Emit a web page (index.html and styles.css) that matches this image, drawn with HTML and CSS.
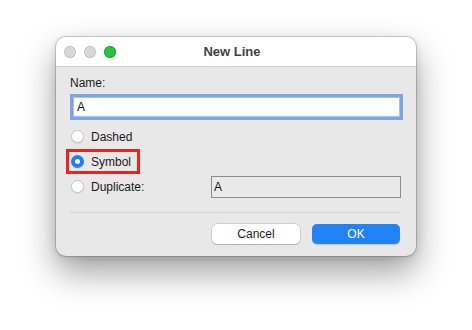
FILE: index.html
```html
<!DOCTYPE html>
<html lang="en">

<head>
    <meta charset="UTF-8">
    <meta name="viewport" content="width=device-width, initial-scale=1.0">
    <title>New Line</title>
    <link rel="stylesheet" href="styles.css">
</head>

<body>
    <div class="window">
        <div class="titlebar">
            <div class="lights">
                <span class="light"></span>
                <span class="light"></span>
                <span class="light green"></span>
            </div>
            <div class="title">New Line</div>
        </div>

        <div class="content">
            <label class="field-label" for="lineName">Name:</label>
            <input type="text" id="lineName" class="name-input" value="A">

            <div class="options">
                <div class="row">
                    <label class="radio"><span class="dot"></span>Dashed</label>
                </div>
                <div class="row">
                    <label class="radio"><span class="dot checked"></span>Symbol</label>
                    <span class="mark"></span>
                </div>
                <div class="row">
                    <label class="radio"><span class="dot"></span>Duplicate:</label>
                    <input type="text" class="dup-input" value="A" readonly>
                </div>
            </div>

            <div class="separator"></div>

            <div class="button-group">
                <button class="btn">Cancel</button>
                <button class="btn primary">OK</button>
            </div>
        </div>
    </div>
</body>

</html>
```

FILE: styles.css
```css
/* Janela do diálogo */
html {
    background-color: #ffffff;
}

body {
    margin: 0;
    min-height: 330px;
    font-family: "Liberation Sans", Arial, sans-serif;
    font-size: 12px;
    color: #1a1a1a;
    padding: 37px 0 0 56px;
    box-sizing: border-box;
}

.window {
    width: 360px;
    height: 219px;
    box-sizing: border-box;
    background-color: #e8e8e8;
    border-radius: 10px;
    overflow: hidden;
    box-shadow: 0 0 0 1px rgba(0, 0, 0, 0.16), 0 16px 34px rgba(0, 0, 0, 0.38), 0 2px 8px rgba(0, 0, 0, 0.12);
}

.titlebar {
    height: 29px;
    background-color: #ffffff;
    border-bottom: 1px solid #cfcfcf;
    display: flex;
    align-items: center;
}

.lights {
    display: flex;
    gap: 8px;
    padding-left: 8px;
}

.light {
    width: 12px;
    height: 12px;
    border-radius: 50%;
    background-color: #d8d8d8;
    box-shadow: inset 0 0 0 1px #c6c6c6;
}

.light.green {
    background-color: #2bc23e;
    box-shadow: inset 0 0 0 1px #22a833;
}

.title {
    flex: 1;
    text-align: center;
    font-weight: bold;
    font-size: 13px;
    color: #3f3f3f;
    margin-right: 68px;
}

.content {
    padding: 9px 16px 12px 14px;
}

.field-label {
    display: block;
    line-height: 15px;
    height: 15px;
}

.name-input {
    display: block;
    box-sizing: border-box;
    width: calc(100% - 3px);
    height: 20px;
    margin: 6px 0 0 3px;
    padding: 0 3px;
    border: 1px solid #a9c0ee;
    outline: none;
    box-shadow: 0 0 0 3px #7fa3e8;
    background-color: #fff;
    font-family: inherit;
    font-size: 12px;
    color: #111;
}

.options {
    margin-top: 7px;
}

.row {
    position: relative;
    height: 25px;
    display: flex;
    align-items: center;
    justify-content: space-between;
}

.radio {
    display: flex;
    align-items: center;
    gap: 7px;
    padding-left: 1px;
}

.dot {
    width: 13px;
    height: 13px;
    box-sizing: border-box;
    border-radius: 50%;
    background-color: #fff;
    border: 1px solid #c4c4c4;
    box-shadow: 0 1px 1px rgba(0, 0, 0, 0.08);
}

.dot.checked {
    border: 4px solid #1f7ef6;
    background-color: #fff;
}

/* marcação vermelha em volta da opção */
.mark {
    position: absolute;
    left: -4px;
    top: 0;
    width: 74px;
    height: 25px;
    box-sizing: border-box;
    border: 3px solid #e6261c;
}

.dup-input {
    box-sizing: border-box;
    width: 190px;
    height: 22px;
    margin-right: -1px;
    padding: 0 2px;
    border: 1px solid #8c8c8c;
    background-color: #e9e9e9;
    outline: none;
    font-family: inherit;
    font-size: 12px;
    color: #111;
}

.separator {
    height: 1px;
    background-color: #d3d3d3;
    margin-top: 13px;
}

.button-group {
    display: flex;
    justify-content: flex-end;
    gap: 12px;
    margin-top: 11px;
}

.btn {
    width: 88px;
    height: 20px;
    border: none;
    border-radius: 5px;
    background-color: #fff;
    box-shadow: 0 0 0 0.5px rgba(0, 0, 0, 0.2), 0 1px 1px rgba(0, 0, 0, 0.15);
    font-family: inherit;
    font-size: 12px;
    color: #222;
    padding: 0;
}

.btn.primary {
    background-color: #2283f7;
    color: #fff;
    box-shadow: 0 1px 1px rgba(0, 0, 0, 0.15);
}
```
